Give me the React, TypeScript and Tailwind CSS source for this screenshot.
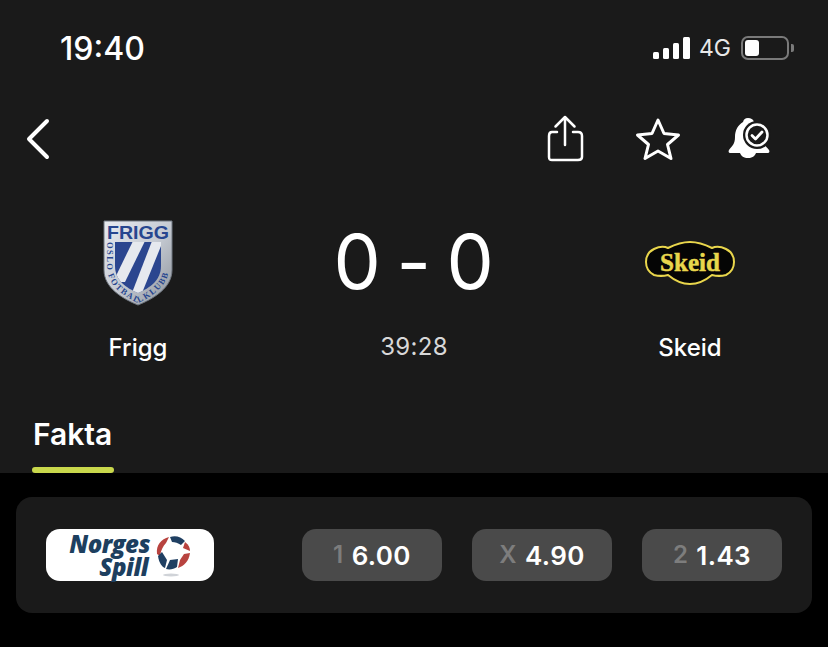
const FriggLogo = () => (
  <svg width="70" height="86" viewBox="0 0 70 86">
    <defs>
      <linearGradient id="silver" x1="0" y1="0" x2="1" y2="1">
        <stop offset="0" stopColor="#e8ebf0" />
        <stop offset="0.5" stopColor="#c6cbd3" />
        <stop offset="1" stopColor="#8d939c" />
      </linearGradient>
      <clipPath id="inner">
        <path d="M12 22H58V46C58 60 47 68 35 73C23 68 12 60 12 46Z" />
      </clipPath>
      <path id="ring" d="M4 22V47C4 66 22 77 35 83C48 77 66 66 66 47V22" />
    </defs>
    <path d="M1 1H69V50C69 68 50 79 35 85C20 79 1 68 1 50Z" fill="url(#silver)" stroke="#6f7680" strokeWidth="1" />
    <text x="35" y="19" textAnchor="middle" fontFamily="Liberation Sans, sans-serif" fontSize="18" fontWeight="700" fill="#27468f" textLength="62" lengthAdjust="spacingAndGlyphs">FRIGG</text>
    <g clipPath="url(#inner)">
      <rect x="12" y="22" width="46" height="52" fill="#2b468f" />
      <path d="M30 21L42 21L22 62L10 62Z" fill="#e6e9ee" />
      <path d="M49 21L60 21L37 78L27 78Z" fill="#e6e9ee" />
    </g>
    <text fontFamily="Liberation Serif, serif" fontSize="8.500" fontWeight="700" fill="#27468f" letterSpacing="1.400">
      <textPath href="#ring">OSLO FOTBALLKLUBB</textPath>
    </text>
  </svg>
);

const SkeidLogo = () => (
  <svg width="92" height="46" viewBox="0 0 92 46">
    <path
      d="M24 8C30 5 38 2 46 2C54 2 62 5 68 8C72 6 78 7 82 9C88 12 90 17 90 22C90 27 88 32 82 35C78 36 72 36 68 35C62 40 54 44 46 44C38 44 30 40 24 35C20 36 14 36 10 35C4 32 2 27 2 22C2 17 4 12 10 9C14 7 20 6 24 8Z"
      fill="#050505"
      stroke="#e9d64c"
      strokeWidth="2"
    />
    <text x="46" y="31" textAnchor="middle" fontFamily="Liberation Serif, serif" fontSize="25" fontWeight="700" fill="#e9d64c" stroke="#e9d64c" strokeWidth="0.500" textLength="60" lengthAdjust="spacingAndGlyphs">Skeid</text>
  </svg>
);

const NorgesBall = () => (
  <svg width="48" height="50" viewBox="0 0 48 50" className="shrink-0">
    <ellipse cx="21" cy="45" rx="8" ry="1.500" fill="#d0d3d8" />
    <path d="M7 24C6 15 11 9 19 7L16 13C13 16 11 20 10 26Z" fill="#b8433f" />
    <path d="M20 7C26 5 31 7 35 11L31 15C28 13 25 12 22 12Z" fill="#1f3f62" />
    <path d="M35 12C39 15 40 18 40 21L33 18Z" fill="#b8433f" />
    <path d="M8 26C9 33 12 37 15 38L17 30L12 22Z" fill="#1f3f62" />
    <path d="M16 39C20 40 24 39 27 37L28 29L20 30Z" fill="#1f3f62" />
    <path d="M40 23C39 31 34 36 28 38L30 30L34 24Z" fill="#b8433f" />
  </svg>
);

const Odd = ({ label, value }: { label: string; value: string }) => (
  <button className="flex h-[52px] w-[140px] items-center justify-center gap-[8px] rounded-[14px] bg-[#4a4a4a] text-[26px] font-semibold tracking-[0.4px]">
    <span className="text-[#7d7d7d] text-[24px]">{label}</span>
    <span className="text-white">{value}</span>
  </button>
);

export default function App() {
  return (
    <div className="flex h-[647px] w-[828px] flex-col overflow-hidden bg-black font-['Inter',sans-serif] text-white">
      <div className="flex h-[473px] shrink-0 flex-col bg-[#1a1a1a]">
        {/* status bar */}
        <div className="mt-[30px] flex h-[36px] items-center justify-between pl-[60px] pr-[34px]">
          <span className="mt-[2px] text-[32px] font-medium leading-none">19:40</span>
          <div className="flex items-center">
            <div className="flex h-[22px] items-end gap-[4px]">
              <div className="h-[7px] w-[6px] rounded-[1.5px] bg-white" />
              <div className="h-[11px] w-[6px] rounded-[1.5px] bg-white" />
              <div className="h-[16px] w-[6px] rounded-[1.5px] bg-white" />
              <div className="h-[22px] w-[7px] rounded-[1.5px] bg-white" />
            </div>
            <span className="ml-[9px] text-[23px] leading-none text-[#e8e8e8]">4G</span>
            <div className="ml-[10px] flex h-[24px] w-[48px] items-center rounded-[7px] border-2 border-[#7a7a7a] pl-[2px]">
              <div className="h-[16px] w-[14px] rounded-[3px] bg-white" />
            </div>
            <div className="ml-[2px] h-[8px] w-[3px] rounded-r-[2px] bg-[#7a7a7a]" />
          </div>
        </div>

        {/* nav */}
        <div className="mt-[49px] flex h-[48px] items-center justify-between pl-[24px] pr-[56px]">
          <svg width="28" height="42" viewBox="0 0 28 42" fill="none" stroke="white" strokeWidth="4" strokeLinecap="round" strokeLinejoin="round">
            <path d="M23 3L5 21L23 39" />
          </svg>
          <div className="flex items-center">
            <svg width="38" height="48" viewBox="0 0 38 48" fill="none" stroke="white" strokeWidth="2.500" strokeLinecap="round" strokeLinejoin="round">
              <path d="M11 17H6C3.500 17 3 18.500 3 21V42C3 44.500 3.500 45 6 45H32C34.500 45 36 44.500 36 42V21C36 18.500 34.500 17 32 17H27" />
              <path d="M19 30V2M9.500 11.500L19 2L28.500 11.500" />
            </svg>
            <svg width="46" height="44" viewBox="0 0 46 44" fill="none" stroke="white" strokeWidth="3" strokeLinejoin="round" className="ml-[51px]">
              <path d="M23 3L29 16.500L43.500 18L32.500 27.500L36 41.500L23 34L10 41.500L13.500 27.500L2.500 18L17 16.500Z" />
            </svg>
            <svg width="44" height="44" viewBox="0 0 44 44" className="ml-[47px]">
              <path d="M20 1C23 1 25 2 26 5C32 8 34 13 34 20C34 27 38 29 41 33C42 35 41 36 39 36H28C27 39 24 41 20 41C16 41 13 39 12 36H3C1 36 0 35 1 33C4 29 7 27 7 20C7 13 10 8 15 5C16 2 17 1 20 1Z" fill="white" />
              <circle cx="29" cy="18" r="14" fill="#1a1a1a" />
              <circle cx="29" cy="18" r="10.500" fill="none" stroke="white" strokeWidth="2.500" />
              <path d="M24 18.500L27.500 22L34 15" fill="none" stroke="white" strokeWidth="2.800" strokeLinecap="round" strokeLinejoin="round" />
            </svg>
          </div>
        </div>

        {/* score */}
        <div className="mt-[57px] grid grid-cols-3">
          <div className="flex flex-col items-center">
            <div className="flex h-[86px] items-center"><FriggLogo /></div>
            <span className="mt-[30px] text-[24px] font-medium leading-none">Frigg</span>
          </div>
          <div className="flex flex-col items-center">
            <div className="flex h-[86px] items-center whitespace-pre pb-[4px] text-[75px] leading-none tracking-[0.5px] [word-spacing:-6.5px]">0 - 0</div>
            <span className="mt-[29px] text-[24px] leading-none tracking-[0.3px] text-[#d8d8d8]">39:28</span>
          </div>
          <div className="flex flex-col items-center">
            <div className="flex h-[86px] items-center"><SkeidLogo /></div>
            <span className="mt-[30px] text-[24px] font-medium leading-none">Skeid</span>
          </div>
        </div>

        {/* tab */}
        <div className="mt-auto ml-[32px] flex w-[82px] flex-col items-start">
          <span className="ml-[1px] text-[30px] font-semibold leading-none">Fakta</span>
          <div className="mt-[18px] h-[6px] w-[82px] rounded-[3px] bg-[#c9d84c]" />
        </div>
      </div>

      <div className="mx-[16px] mt-[24px] flex h-[116px] items-center justify-between rounded-[16px] bg-[#1a1a1a] px-[30px]">
        <div className="flex h-[52px] w-[168px] items-center justify-end rounded-[14px] bg-white font-['Open_Sans',sans-serif] italic">
          <div className="flex flex-col items-end text-[24px] font-extrabold leading-[23px] tracking-[-0.5px] text-[#1d3f5f]">
            <span>Norges</span>
            <span className="mr-[2px]">Spill</span>
          </div>
          <NorgesBall />
          <div className="w-[16px]" />
        </div>
        <div className="flex gap-[30px]">
          <Odd label="1" value="6.00" />
          <Odd label="X" value="4.90" />
          <Odd label="2" value="1.43" />
        </div>
      </div>
    </div>
  );
}
